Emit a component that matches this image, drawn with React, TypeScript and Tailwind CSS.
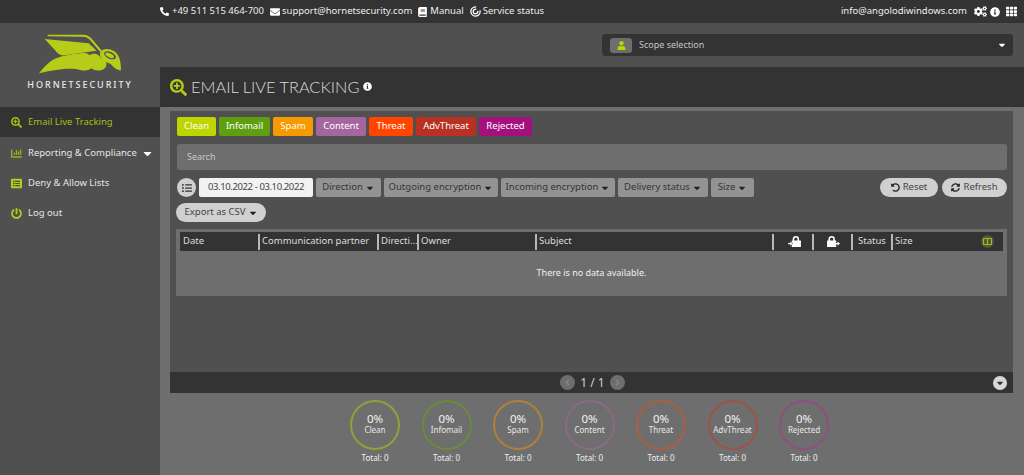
import { FaBook, FaCaretDown, FaChartBar, FaChevronLeft, FaChevronRight, FaCogs, FaEnvelope, FaInfoCircle, FaListAlt, FaListUl, FaPhoneAlt, FaPowerOff, FaSearchPlus, FaSyncAlt, FaTh, FaUndoAlt, FaUser } from 'react-icons/fa';

const tabs = [
  { label: 'Clean', w: 'w-[39px]', bg: 'bg-[#bdd600]' },
  { label: 'Infomail', w: 'w-[51px]', bg: 'bg-[#5f9e0f]' },
  { label: 'Spam', w: 'w-[40px]', bg: 'bg-[#f79a00]' },
  { label: 'Content', w: 'w-[50px]', bg: 'bg-[#a5669f]' },
  { label: 'Threat', w: 'w-[44px]', bg: 'bg-[#ff4500]' },
  { label: 'AdvThreat', w: 'w-[60px]', bg: 'bg-[#b93122]' },
  { label: 'Rejected', w: 'w-[53px]', bg: 'bg-[#a5107f]' },
];

const filters = [
  { label: 'Direction', w: 'w-[65px]' },
  { label: 'Outgoing encryption', w: 'w-[114px]' },
  { label: 'Incoming encryption', w: 'w-[114px]' },
  { label: 'Delivery status', w: 'w-[90px]' },
  { label: 'Size', w: 'w-[43px]' },
];

const stats = [
  { label: 'Clean', border: 'border-[#959f38]' },
  { label: 'Infomail', border: 'border-[#6a8a3c]' },
  { label: 'Spam', border: 'border-[#ae8138]' },
  { label: 'Content', border: 'border-[#8b6a88]' },
  { label: 'Threat', border: 'border-[#ab5f42]' },
  { label: 'AdvThreat', border: 'border-[#9e5248]' },
  { label: 'Rejected', border: 'border-[#904f82]' },
];

function LockIn() {
  return (
    <svg viewBox="0 0 14 12" className="w-[13px] h-[11px]" fill="#fff">
      <path d="M5 5V3.500a3.500 3.500 0 0 1 7 0V5h2v7H4V9.500l1.500-1.300L4 6.800V5Zm1.700 0h3.600V3.500a1.800 1.800 0 0 0-3.600 0Z" fillRule="evenodd" />
      <path d="M0 7.500h2.500V6L5 8.200l-2.500 2.300V9H0Z" />
    </svg>
  );
}

function LockOut() {
  return (
    <svg viewBox="0 0 14 12" className="w-[13px] h-[11px]" fill="#fff">
      <path d="M1.500 5V3.500a3.500 3.500 0 0 1 7 0V5H10v1.500H9L11 8.200 9 10h1v2H0V5Zm1.700 0h3.600V3.500a1.800 1.800 0 0 0-3.600 0Z" fillRule="evenodd" />
      <path d="M9 7.500h2.500V6L14 8.200l-2.500 2.300V9H9Z" />
    </svg>
  );
}

function Logo() {
  return (
    <svg viewBox="0 9 480 186" className="w-[160px] h-[62px]">
      <g fill="#b5cc18">
        <path d="M143 44h105c14 0 24 6 31 17l27 32-5 3-26-30c-7-10-15-16-28-16l-104-1Z" />
        <path d="M134 57l132 13 24 22-96 14c-8 1-16-1-22-8Z" />
        <path d="M117 160c14-18 29-35 48-44 26-11 63-15 88-17 8 0 13 3 16 7 8-6 19-6 27 0l10 11c6 3 12 8 13 12 2 10-5 20-17 22-10 2-20 0-28-6-9 7-20 8-33 5-28-7-67-3-124 10Z" />
        <path d="M303 93c10-9 27-8 40 1 12 9 17 22 19 38 1 7 1 14 0 20-11-3-21-8-27-17-5-7-15-6-24-13-11-8-14-20-8-29Z" />
      </g>
      <ellipse cx="330" cy="106" rx="19" ry="10" transform="rotate(24 330 106)" fill="#505050" />
      <ellipse cx="329" cy="106" rx="14" ry="6" transform="rotate(24 329 106)" fill="#b5cc18" />
    </svg>
  );
}

function ServiceIcon() {
  return (
    <svg viewBox="0 0 12 12" className="w-[11px] h-[11px]" fill="none" stroke="#fff">
      <circle cx="6" cy="6" r="5" strokeWidth="1.500" strokeDasharray="25 6" transform="rotate(-15 6 6)" />
      <circle cx="6" cy="6" r="2.500" strokeWidth="1.400" strokeDasharray="12 4" transform="rotate(-15 6 6)" />
    </svg>
  );
}

function HeaderCell({ w, children, className }: { w: string; children?: React.ReactNode; className?: string }) {
  return (
    <div className={`${w} h-[16px] border-l-2 border-[#b8b8b8] pl-[2px] flex items-center text-[9.500px] text-[#dedede] whitespace-nowrap overflow-hidden ${className ?? ''}`}>
      {children}
    </div>
  );
}

export default function App() {
  return (
    <div className="w-[1024px] h-[475px] overflow-hidden flex flex-col bg-[#505050] text-white font-['Noto_Sans','Liberation_Sans',sans-serif]">
      {/* top bar */}
      <div className="h-[23px] bg-[#333333] flex items-center pl-[160px] pr-[7px] text-[9.500px] text-[#eeeeee] shrink-0">
        <div className="flex items-center">
          <FaPhoneAlt className="w-[9px] h-[9px] mr-[3px] text-white" />
          <span className="mr-[6px]">+49 511 515 464-700</span>
          <FaEnvelope className="w-[10px] h-[10px] mr-[2px] text-white" />
          <span className="mr-[6px]">support@hornetsecurity.com</span>
          <FaBook className="w-[9px] h-[10px] mr-[3px] text-white" />
          <span className="mr-[6px]">Manual</span>
          <ServiceIcon />
          <span className="ml-[2px]">Service status</span>
        </div>
        <div className="ml-auto flex items-center">
          <span className="mr-[7px]">info@angolodiwindows.com</span>
          <FaCogs className="w-[13px] h-[11px] mr-[3px] text-white" />
          <FaInfoCircle className="w-[10px] h-[10px] mr-[6px] text-white" />
          <FaTh className="w-[11px] h-[11px] text-white" />
        </div>
      </div>

      <div className="flex flex-1 min-h-0">
        {/* sidebar */}
        <div className="w-[160px] shrink-0 bg-[#505050] flex flex-col">
          <div className="h-[84px] flex flex-col items-center">
            <Logo />
            <div className="-mt-[6px] text-[9px] font-medium tracking-[1.950px] text-[#e8e8e8] leading-[12px] whitespace-nowrap">HORNETSECURITY</div>
          </div>
          <div className="h-[30px] bg-[#333333] flex items-center pl-[11px] pt-[1px] text-[#a8bf18] text-[9.500px]">
            <FaSearchPlus className="w-[11px] h-[11px] mr-[6px]" />
            Email Live Tracking
          </div>
          <div className="mt-[1px] h-[30px] flex items-center pl-[11px] pt-[1px] text-[9.500px] text-[#e6e6e6]">
            <FaChartBar className="w-[11px] h-[11px] mr-[6px] text-[#9aae1c]" />
            Reporting &amp; Compliance
            <FaCaretDown className="w-[13px] h-[13px] ml-[4px] text-white" />
          </div>
          <div className="h-[30px] flex items-center pl-[11px] pt-[1px] text-[9.500px] text-[#e6e6e6]">
            <FaListAlt className="w-[11px] h-[11px] mr-[6px] text-[#b5cc18]" />
            Deny &amp; Allow Lists
          </div>
          <div className="h-[30px] flex items-center pl-[11px] pt-[1px] text-[9.500px] text-[#e6e6e6]">
            <FaPowerOff className="w-[11px] h-[11px] mr-[6px] text-[#b5cc18]" />
            Log out
          </div>
        </div>

        {/* main */}
        <div className="flex-1 min-w-0 flex flex-col">
          <div className="h-[44px] shrink-0 bg-[#505050] flex items-center justify-end pr-[11px]">
            <div className="w-[411px] h-[22px] bg-[#333333] rounded-[3px] flex items-center pl-[8px] pr-[6px] text-[9px] text-[#c4c4c4]">
              <div className="w-[22px] h-[15px] rounded-[3px] bg-[#6e6e6e] flex items-center justify-center mr-[7px]">
                <FaUser className="w-[9px] h-[9px] text-[#bdd600]" />
              </div>
              Scope selection
              <FaCaretDown className="ml-auto w-[10px] h-[10px] text-white" />
            </div>
          </div>

          <div className="h-[40px] shrink-0 bg-[#333333] flex items-center pl-[10px]">
            <FaSearchPlus className="w-[17px] h-[17px] text-[#b5cc18] mr-[4px]" />
            <span className="text-[16.400px] font-light text-[#dcdcdc] leading-none font-['Lato','Noto_Sans',sans-serif]">EMAIL LIVE TRACKING</span>
            <FaInfoCircle className="w-[9px] h-[9px] text-white ml-[3px] -mt-[2px]" />
          </div>

          <div className="flex-1 min-h-0 bg-[#6e6e6e] flex flex-col pt-[4px]">
            <div className="ml-[10px] mr-[11px] h-[261px] shrink-0 bg-[#505050] pt-[6px] pl-[7px] pr-[6px] flex flex-col">
              <div className="flex gap-[3px]">
                {tabs.map((t) => (
                  <div key={t.label} className={`${t.w} ${t.bg} h-[19px] rounded-[2px] flex items-center justify-center text-[9.500px] text-white whitespace-nowrap`}>
                    {t.label}
                  </div>
                ))}
              </div>

              <div className="mt-[8px] h-[26px] rounded-[3px] bg-[#6e6e6e] flex items-center pl-[10px] text-[9px] text-[#c8c8c8]">Search</div>

              <div className="mt-[8px] flex items-center h-[19px]">
                <div className="w-[19px] h-[19px] rounded-full bg-[#d0d0d0] flex items-center justify-center mr-[3px]">
                  <FaListUl className="w-[10px] h-[10px] text-[#333333]" />
                </div>
                <div className="w-[114px] h-[19px] rounded-[2px] bg-[#f2f2f2] flex items-center justify-center text-[9.500px] tracking-[-0.400px] text-[#444444] mr-[3px] whitespace-nowrap">03.10.2022 - 03.10.2022</div>
                <div className="flex gap-[3px]">
                  {filters.map((f) => (
                    <div key={f.label} className={`${f.w} h-[19px] rounded-[2px] bg-[#939393] flex items-center justify-center text-[9.500px] text-[#333333] whitespace-nowrap`}>
                      {f.label}
                      <FaCaretDown className="w-[10px] h-[10px] ml-[2px] text-[#222222]" />
                    </div>
                  ))}
                </div>
                <div className="ml-auto flex gap-[4px]">
                  <div className="w-[58px] h-[19px] rounded-full bg-[#d0d0d0] flex items-center justify-center text-[9.500px] text-[#444444]">
                    <FaUndoAlt className="w-[9px] h-[9px] mr-[3px] text-[#222222]" />
                    Reset
                  </div>
                  <div className="w-[65px] h-[19px] rounded-full bg-[#d0d0d0] flex items-center justify-center text-[9.500px] text-[#444444]">
                    <FaSyncAlt className="w-[9px] h-[9px] mr-[3px] text-[#222222]" />
                    Refresh
                  </div>
                </div>
              </div>

              <div className="mt-[6px] -ml-[1px] w-[90px] h-[19px] rounded-full bg-[#d0d0d0] flex items-center justify-center text-[9.500px] text-[#444444] whitespace-nowrap">
                Export as CSV
                <FaCaretDown className="w-[10px] h-[10px] ml-[2px] text-[#222222]" />
              </div>

              <div className="mt-[7px] -ml-[1px] h-[67px] bg-[#6e6e6e] px-[4px] pt-[3px]">
                <div className="h-[19px] bg-[#333333] flex items-center">
                  <div className="w-[78px] pl-[3px] text-[9.500px] text-[#dedede]">Date</div>
                  <HeaderCell w="w-[119px]">Communication partner</HeaderCell>
                  <HeaderCell w="w-[40px]">Directi...</HeaderCell>
                  <HeaderCell w="w-[118px]">Owner</HeaderCell>
                  <HeaderCell w="w-[237px]">Subject</HeaderCell>
                  <HeaderCell w="w-[40px]" className="justify-center"><LockIn /></HeaderCell>
                  <HeaderCell w="w-[39px]" className="justify-center"><LockOut /></HeaderCell>
                  <HeaderCell w="w-[40px]" className="pl-[5px]">Status</HeaderCell>
                  <HeaderCell w="w-[90px]">Size</HeaderCell>
                  <div className="w-[13px] h-[13px] rounded-full bg-[#55583a] flex items-center justify-center">
                    <div className="w-[9px] h-[7px] rounded-[1px] bg-[#a6bd16] flex justify-center py-[1px] gap-[1px]">
                      <div className="w-[3px] bg-[#55583a]" />
                      <div className="w-[3px] bg-[#55583a]" />
                    </div>
                  </div>
                </div>
                <div className="h-[44px] flex items-center justify-center text-[9px] text-[#f0f0f0]">There is no data available.</div>
              </div>
            </div>

            <div className="ml-[10px] mr-[11px] pl-[2px] h-[21px] shrink-0 bg-[#333333] flex items-center justify-center relative">
              <div className="w-[15px] h-[15px] rounded-full bg-[#6e6e6e] flex items-center justify-center">
                <FaChevronLeft className="w-[7px] h-[7px] text-[#8a8a8a]" />
              </div>
              <span className="mx-[5px] text-[12px] text-[#d0d0d0]">1 / 1</span>
              <div className="w-[15px] h-[15px] rounded-full bg-[#6e6e6e] flex items-center justify-center">
                <FaChevronRight className="w-[7px] h-[7px] text-[#8a8a8a]" />
              </div>
              <div className="absolute right-[6px] top-[4px] w-[14px] h-[14px] rounded-full bg-[#d8d8d8] flex items-center justify-center">
                <FaCaretDown className="w-[10px] h-[10px] text-[#333333]" />
              </div>
            </div>

            <div className="flex-1 pl-[190px] pt-[7px] flex gap-[21.500px]">
              {stats.map((s) => (
                <div key={s.label} className="w-[50px] flex flex-col items-center">
                  <div className={`w-[50px] h-[50px] rounded-full border-[2.500px] ${s.border} flex flex-col items-center justify-center pb-[3px]`}>
                    <span className="text-[11.500px] leading-[12px] text-[#f2f2f2]">0%</span>
                    <span className="text-[8px] leading-[10px] text-[#e8e8e8] whitespace-nowrap">{s.label}</span>
                  </div>
                  <span className="mt-[3px] text-[8px] leading-[10px] text-[#eeeeee] whitespace-nowrap">Total: 0</span>
                </div>
              ))}
            </div>
          </div>
        </div>
      </div>
    </div>
  );
}
